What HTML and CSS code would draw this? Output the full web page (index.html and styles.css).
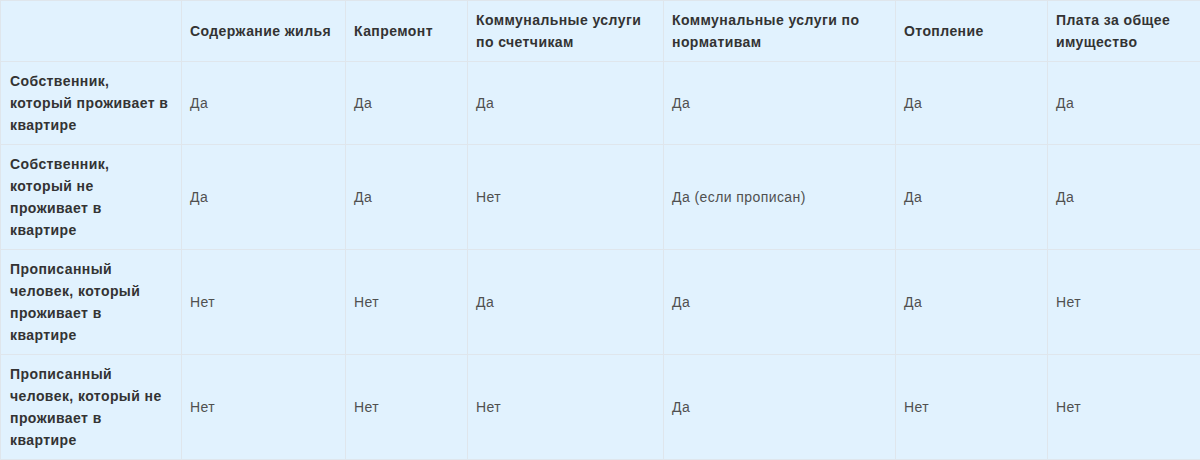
FILE: index.html
```html
<!DOCTYPE html>
<html lang="ru">
<head>
<meta charset="utf-8">
<title>Таблица</title>
<link rel="stylesheet" href="styles.css">
</head>
<body>
<div class="wrap">
<table class="grid">
  <colgroup>
    <col class="c1"><col class="c2"><col class="c3"><col class="c4"><col class="c5"><col class="c6"><col class="c7">
  </colgroup>
  <thead>
    <tr>
      <th></th>
      <th>Содержание жилья</th>
      <th>Капремонт</th>
      <th>Коммунальные услуги по счетчикам</th>
      <th>Коммунальные услуги по нормативам</th>
      <th>Отопление</th>
      <th>Плата за общее имущество</th>
    </tr>
  </thead>
  <tbody>
    <tr>
      <th>Собственник, который проживает в квартире</th>
      <td>Да</td><td>Да</td><td>Да</td><td>Да</td><td>Да</td><td>Да</td>
    </tr>
    <tr>
      <th>Собственник, который не проживает в квартире</th>
      <td>Да</td><td>Да</td><td>Нет</td><td>Да (если прописан)</td><td>Да</td><td>Да</td>
    </tr>
    <tr>
      <th>Прописанный человек, который проживает в квартире</th>
      <td>Нет</td><td>Нет</td><td>Да</td><td>Да</td><td>Да</td><td>Нет</td>
    </tr>
    <tr>
      <th>Прописанный человек, который не проживает в квартире</th>
      <td>Нет</td><td>Нет</td><td>Нет</td><td>Да</td><td>Нет</td><td>Нет</td>
    </tr>
  </tbody>
</table>
</div>
</body>
</html>
```
FILE: styles.css
```css
html, body {
  margin: 0;
  padding: 0;
  background: #ffffff;
  overflow: hidden;
}
.wrap {
  width: 1200px;
  overflow: hidden;
}
.grid {
  border-collapse: collapse;
  table-layout: fixed;
  width: 1212px;
  background: #e1f2fe;
  font-family: "Liberation Sans", Arial, sans-serif;
  font-size: 14px;
  line-height: 22px;
  letter-spacing: 0.42px;
}
.c1 { width: 181px; }
.c2 { width: 164px; }
.c3 { width: 122px; }
.c4 { width: 196px; }
.c5 { width: 232px; }
.c6 { width: 152px; }
.c7 { width: 165px; }
.grid th, .grid td {
  border: 1px solid #dfe6ec;
  padding: 8px 8px 8px 8px;
  vertical-align: middle;
  text-align: left;
}
.grid th {
  font-weight: bold;
  color: #333333;
}
.grid td {
  font-weight: normal;
  color: #505050;
}
.grid thead th {
  height: 44px;
}
.grid tbody th {
  padding-left: 9px;
  padding-right: 12px;
}
```
